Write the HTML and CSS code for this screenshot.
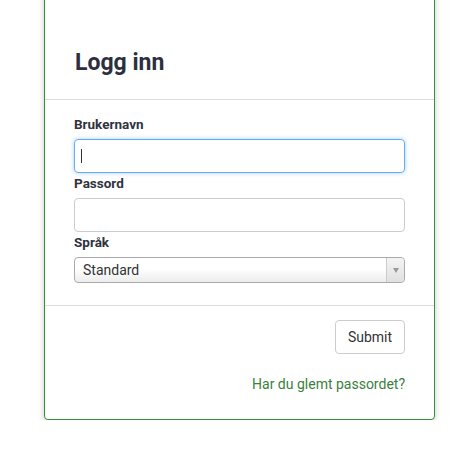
FILE: index.html
```html
<!DOCTYPE html>
<html lang="no">
<head>
<meta charset="utf-8">
<title>Logg inn</title>
<link rel="stylesheet" href="styles.css">
</head>
<body>
<div class="card">
  <div class="card-head">
    <h1 class="title">Logg inn</h1>
  </div>
  <div class="card-body">
    <label class="label">Brukernavn</label>
    <div class="input focused"><span class="caret"></span></div>
    <label class="label">Passord</label>
    <div class="input"></div>
    <label class="label">Språk</label>
    <div class="select">
      <span class="select-text">Standard</span>
      <span class="select-arrow"><span class="tri"></span></span>
    </div>
  </div>
  <div class="card-foot">
    <button class="btn" type="button">Submit</button>
    <a class="link" href="#">Har du glemt passordet?</a>
  </div>
</div>
</body>
</html>
```
FILE: styles.css
```css
* { box-sizing: border-box; }
body {
  margin: 0;
  background: #fff;
  font-family: Roboto, "Liberation Sans", sans-serif;
  color: #333;
}
.card {
  margin: -10px 0 0 44px;
  width: 391px;
  border: 1px solid #34923a;
  border-radius: 4px;
  background: #fff;
  box-shadow: 0 2px 6px rgba(0,0,0,0.22);
}
.card-head {
  height: 109px;
  border-bottom: 1px solid #dcdcdc;
  padding: 57px 0 0 30px;
}
.title {
  margin: 0;
  font-size: 23px;
  line-height: 30px;
  font-weight: 700;
  color: #2b2f3e;
}
.card-body {
  padding: 15px 29px 22px 29px;
  border-bottom: 1px solid #dcdcdc;
  display: flex;
  flex-direction: column;
}
.label {
  font-size: 13.5px;
  font-weight: 700;
  line-height: 18px;
  color: #2f3340;
  margin-bottom: 6px;
}
.input {
  height: 34px;
  border: 1px solid #ccc;
  border-radius: 4px;
  margin-bottom: 1px;
  display: flex;
  align-items: center;
  padding-left: 6px;
}
.input.focused {
  border-color: #66afe9;
  box-shadow: 0 0 4px rgba(102,175,233,0.6);
}
.caret {
  width: 1px;
  height: 14px;
  background: #333;
}
.select {
  height: 26px;
  border: 1px solid #aaa;
  border-radius: 4px;
  background: linear-gradient(#fff 0%, #fff 45%, #ececec 100%);
  display: flex;
  align-items: center;
  font-size: 14px;
  color: #333;
}
.select-text {
  flex: 1;
  padding-left: 8px;
}
.select-arrow {
  width: 18px;
  height: 100%;
  border-left: 1px solid #ccc;
  display: flex;
  align-items: center;
  justify-content: center;
  background: linear-gradient(#f4f4f4, #e0e0e0);
  border-radius: 0 4px 4px 0;
}
.tri {
  width: 0;
  height: 0;
  border-left: 3px solid transparent;
  border-right: 3px solid transparent;
  border-top: 5px solid #999;
}
.card-foot {
  display: flex;
  flex-direction: column;
  align-items: flex-end;
  padding: 14px 29px 26px 0;
}
.btn {
  height: 34px;
  width: 70px;
  border: 1px solid #ccc;
  border-radius: 4px;
  background: #fff;
  font-family: Roboto, "Liberation Sans", sans-serif;
  font-size: 14px;
  color: #333;
  padding: 0;
}
.link {
  margin-top: 21px;
  font-size: 14px;
  line-height: 18px;
  color: #3a7f3e;
  text-decoration: none;
}
```
